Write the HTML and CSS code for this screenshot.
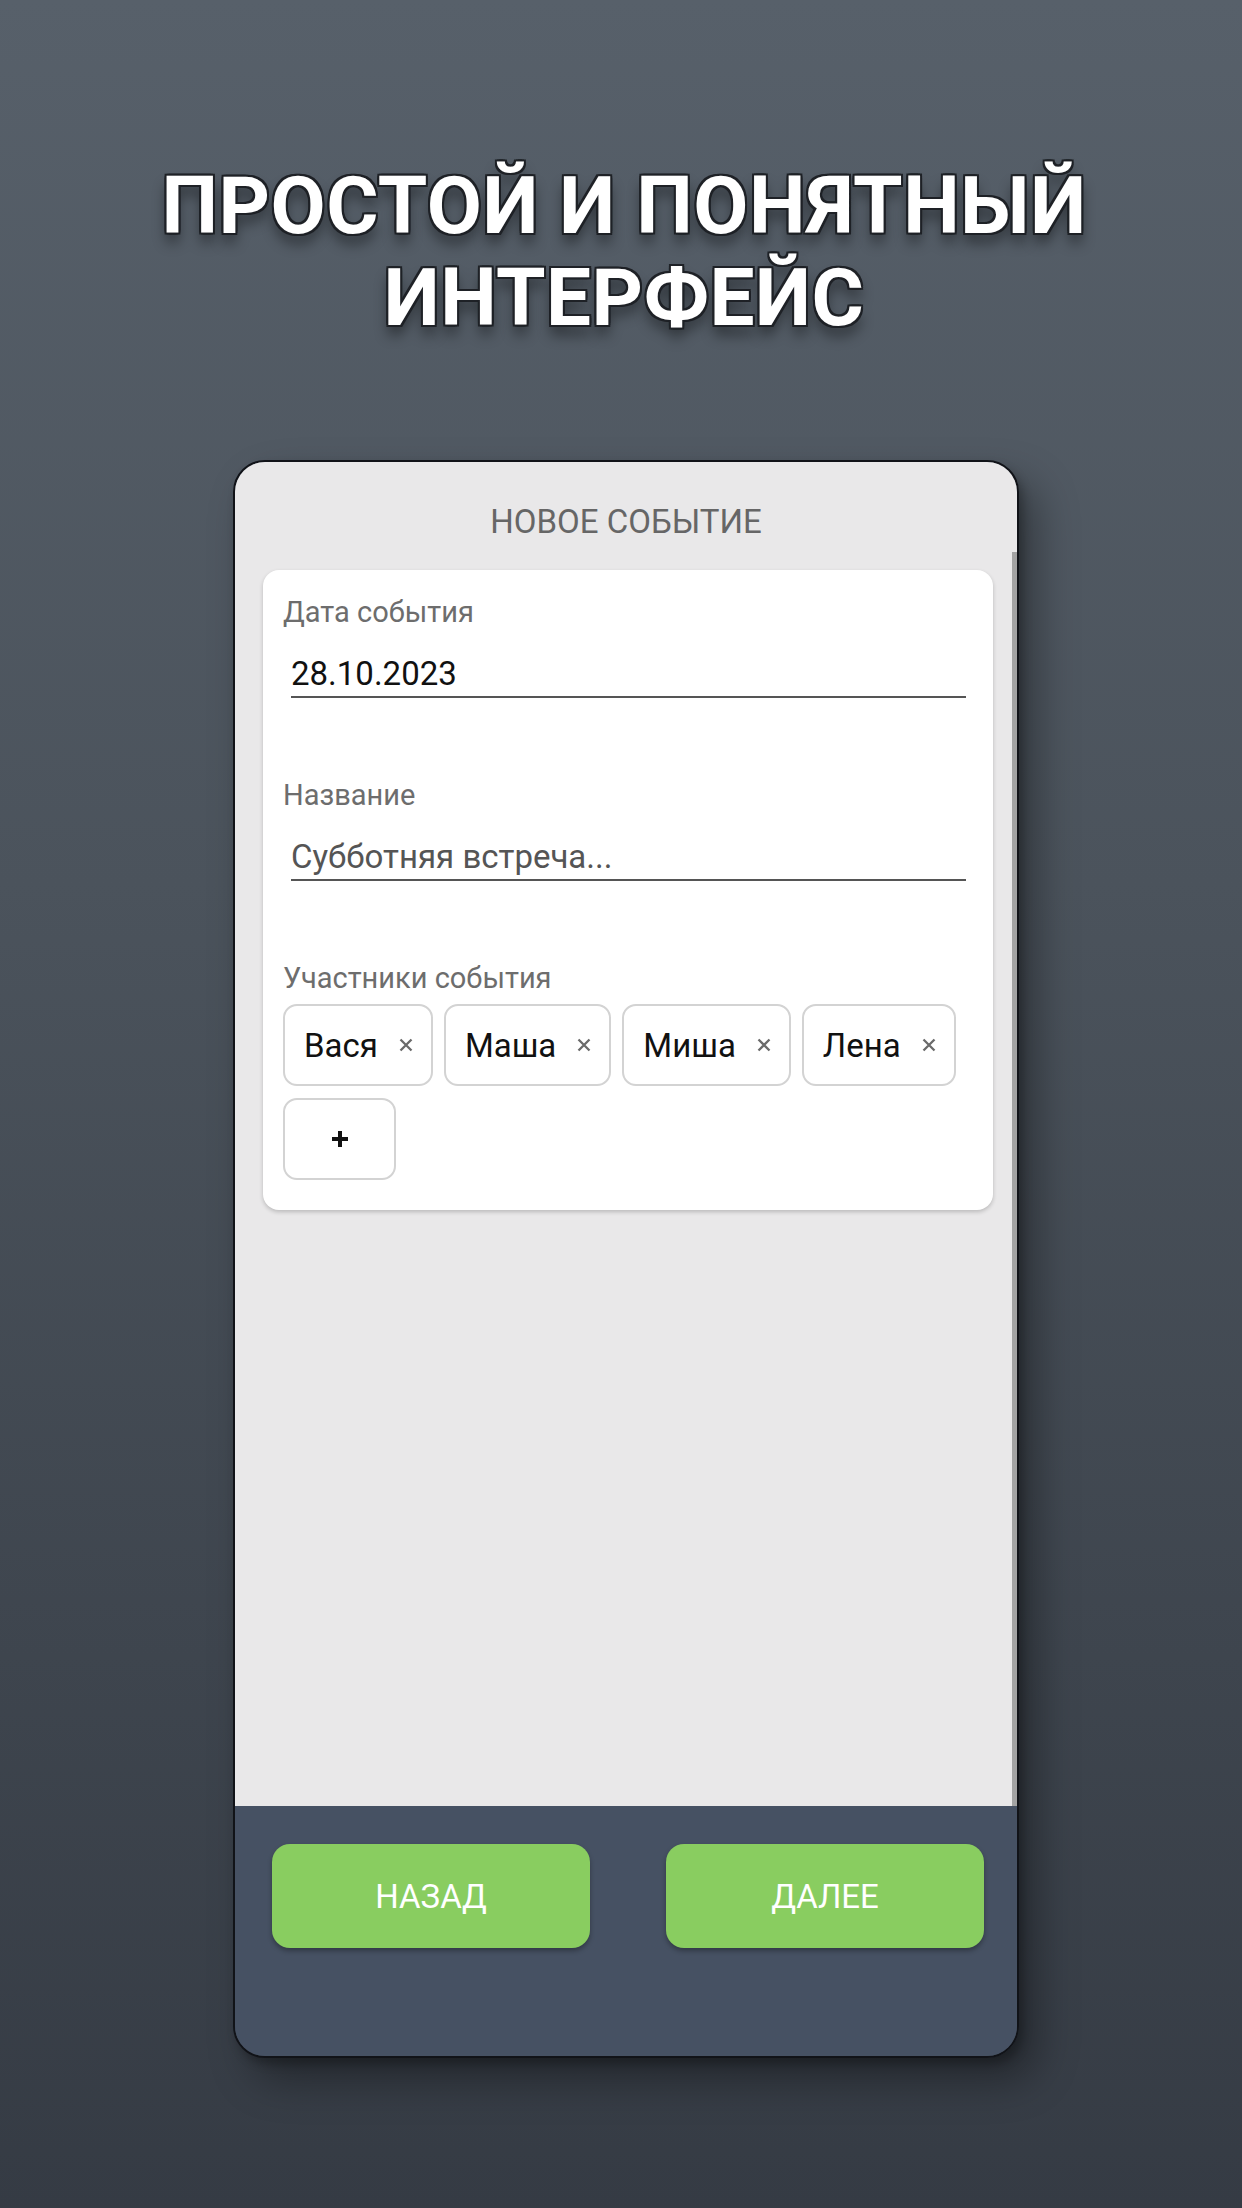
FILE: index.html
```html
<!DOCTYPE html>
<html lang="ru">
<head>
<meta charset="utf-8">
<title>Новое событие</title>
<link rel="stylesheet" href="styles.css">
</head>
<body>
<div class="page">
  <h1 class="promo-title">ПРОСТОЙ И ПОНЯТНЫЙ<br>ИНТЕРФЕЙС</h1>
  <div class="phone-wrap">
    <div class="phone">
      <div class="screen">
        <div class="scrollbar"></div>
        <div class="screen-title">НОВОЕ СОБЫТИЕ</div>
        <div class="card">
          <div class="field">
            <div class="label">Дата события</div>
            <div class="input value">28.10.2023</div>
          </div>
          <div class="field">
            <div class="label">Название</div>
            <div class="input placeholder">Субботняя встреча...</div>
          </div>
          <div class="field">
            <div class="label">Участники события</div>
            <div class="chips">
              <div class="chip"><span class="chip-name">Вася</span><svg class="chip-x" viewBox="0 0 14 14"><path d="M1.5 1.5L12.5 12.5M12.5 1.5L1.5 12.5"/></svg></div>
              <div class="chip"><span class="chip-name">Маша</span><svg class="chip-x" viewBox="0 0 14 14"><path d="M1.5 1.5L12.5 12.5M12.5 1.5L1.5 12.5"/></svg></div>
              <div class="chip"><span class="chip-name">Миша</span><svg class="chip-x" viewBox="0 0 14 14"><path d="M1.5 1.5L12.5 12.5M12.5 1.5L1.5 12.5"/></svg></div>
              <div class="chip"><span class="chip-name">Лена</span><svg class="chip-x" viewBox="0 0 14 14"><path d="M1.5 1.5L12.5 12.5M12.5 1.5L1.5 12.5"/></svg></div>
              <div class="chip chip-add"><svg class="plus" viewBox="0 0 18 18"><path d="M9 1V17M1 9H17"/></svg></div>
            </div>
          </div>
        </div>
      </div>
      <div class="footer">
        <div class="btn">НАЗАД</div>
        <div class="btn">ДАЛЕЕ</div>
      </div>
    </div>
  </div>
</div>
</body>
</html>
```
FILE: styles.css
```css
html, body {
  margin: 0;
  padding: 0;
}
body {
  width: 1242px;
  height: 2208px;
  overflow: hidden;
  font-family: Roboto, "Noto Sans", "Liberation Sans", sans-serif;
  background: linear-gradient(180deg, #57606a 0%, #4b535c 40%, #3e454e 75%, #353b44 100%);
}
.page {
  display: flex;
  flex-direction: column;
  align-items: stretch;
}
.promo-title {
  margin: 160px 0 0 0;
  padding-left: 6px;
  text-align: center;
  font-family: Roboto, "Liberation Sans", sans-serif;
  font-weight: 700;
  font-size: 80px;
  line-height: 92px;
  color: #ffffff;
  letter-spacing: 0.5px;
  text-shadow:
    -2px -2px 0 #1e2126, 2px -2px 0 #1e2126, -2px 2px 0 #1e2126, 2px 2px 0 #1e2126,
    0 -2px 0 #1e2126, 0 2px 0 #1e2126, -2px 0 0 #1e2126, 2px 0 0 #1e2126,
    0 10px 14px rgba(0, 0, 0, 0.45);
}
.phone-wrap {
  display: flex;
  justify-content: center;
  padding-left: 10px;
  margin-top: 116px;
}
.phone {
  width: 782px;
  border: 2px solid #111318;
  border-radius: 32px;
  overflow: hidden;
  display: flex;
  flex-direction: column;
  box-shadow: 18px 22px 40px rgba(0, 0, 0, 0.35), 4px 6px 10px rgba(0, 0, 0, 0.25);
}
.screen {
  position: relative;
  height: 1344px;
  background: #e9e8e9;
  display: flex;
  flex-direction: column;
}
.scrollbar {
  position: absolute;
  right: 0;
  top: 90px;
  bottom: 0;
  width: 5px;
  background: #a3a3a3;
}
.screen-title {
  padding: 40px 0 28px 0;
  text-align: center;
  font-size: 33px;
  line-height: 40px;
  color: #666666;
}
.card {
  margin: 0 24px 0 28px;
  background: #ffffff;
  border-radius: 16px;
  box-shadow: 0 2px 4px rgba(0, 0, 0, 0.2);
  padding: 25px 27px 30px 20px;
  display: flex;
  flex-direction: column;
  gap: 80px;
}
.field {
  display: flex;
  flex-direction: column;
}
.label {
  font-size: 29px;
  line-height: 34px;
  color: #6d6d6d;
}
.input {
  margin: 23px 0 0 8px;
  font-size: 33px;
  line-height: 44px;
  border-bottom: 2px solid #555555;
}
.value {
  color: #111111;
}
.placeholder {
  color: #555555;
}
.chips {
  margin-top: 9px;
  display: flex;
  flex-wrap: wrap;
  gap: 12px 11px;
}
.chip {
  box-sizing: border-box;
  height: 82px;
  border: 2px solid #d3d3d3;
  border-radius: 14px;
  padding: 0 18px 0 19px;
  display: flex;
  align-items: center;
  background: #ffffff;
}
.chip-name {
  font-size: 33px;
  color: #111111;
}
.chip-x {
  width: 14px;
  height: 14px;
  margin-left: 21px;
  fill: none;
  stroke: #6a6a6a;
  stroke-width: 2.3;
}
.chip-add {
  width: 113px;
  justify-content: center;
  padding: 0;
}
.plus {
  width: 18px;
  height: 18px;
  fill: none;
  stroke: #111111;
  stroke-width: 4;
}
.footer {
  height: 250px;
  box-sizing: border-box;
  background: #465163;
  padding: 38px 33px 0 37px;
  display: flex;
  justify-content: space-between;
  align-items: flex-start;
}
.btn {
  width: 318px;
  height: 104px;
  border-radius: 18px;
  background: #89cd60;
  color: #ffffff;
  font-size: 33px;
  display: flex;
  align-items: center;
  justify-content: center;
  box-shadow: 0 3px 5px rgba(0, 0, 0, 0.3);
}
```
